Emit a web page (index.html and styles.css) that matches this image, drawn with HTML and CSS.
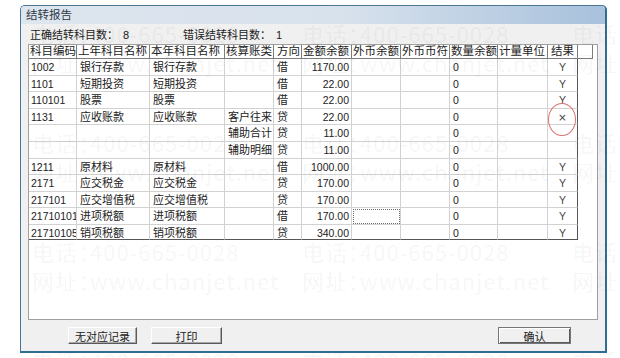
FILE: index.html
```html
<!DOCTYPE html>
<html lang="zh-CN">

<head>
  <meta charset="UTF-8">
  <title>结转报告</title>
  <link rel="stylesheet" href="styles.css">
</head>

<body>
  <div class="window">
    <div class="titlebar">结转报告</div>

    <div class="summary">
      <span class="stat">正确结转科目数：<em>8</em></span>
      <span class="stat">错误结转科目数：<em>1</em></span>
    </div>

    <div class="grid-panel">
      <div class="grid-head">
        <span>科目编码</span><span>上年科目名称</span><span>本年科目名称</span><span>核算账类</span><span>方向</span><span>金额余额</span><span>外币余额</span><span>外币币符</span><span>数量余额</span><span>计量单位</span><span>结果</span><span></span>
      </div>
      <div class="grid-body">
        <span>1002</span><span>银行存款</span><span>银行存款</span><span></span><span>借</span><span>1170.00</span><span></span><span></span><span>0</span><span></span><span>Y</span>
        <span>1101</span><span>短期投资</span><span>短期投资</span><span></span><span>借</span><span>22.00</span><span></span><span></span><span>0</span><span></span><span>Y</span>
        <span>110101</span><span>股票</span><span>股票</span><span></span><span>借</span><span>22.00</span><span></span><span></span><span>0</span><span></span><span>Y</span>
        <span>1131</span><span>应收账款</span><span>应收账款</span><span>客户往来</span><span>贷</span><span>22.00</span><span></span><span></span><span>0</span><span></span><span class="fail">×</span>
        <span></span><span></span><span></span><span>辅助合计</span><span>贷</span><span>11.00</span><span></span><span></span><span>0</span><span></span><span></span>
        <span></span><span></span><span></span><span>辅助明细</span><span>贷</span><span>11.00</span><span></span><span></span><span>0</span><span></span><span></span>
        <span>1211</span><span>原材料</span><span>原材料</span><span></span><span>借</span><span>1000.00</span><span></span><span></span><span>0</span><span></span><span>Y</span>
        <span>2171</span><span>应交税金</span><span>应交税金</span><span></span><span>贷</span><span>170.00</span><span></span><span></span><span>0</span><span></span><span>Y</span>
        <span>217101</span><span>应交增值税</span><span>应交增值税</span><span></span><span>贷</span><span>170.00</span><span></span><span></span><span>0</span><span></span><span>Y</span>
        <span>21710101</span><span>进项税额</span><span>进项税额</span><span></span><span>借</span><span>170.00</span><span class="focus"></span><span></span><span>0</span><span></span><span>Y</span>
        <span>21710105</span><span>销项税额</span><span>销项税额</span><span></span><span>贷</span><span>340.00</span><span></span><span></span><span>0</span><span></span><span>Y</span>
        <!-- 红圈标注 -->
        <i class="mark"></i>
      </div>
    </div>

    <div class="buttons">
      <button class="btn">无对应记录</button>
      <button class="btn btn-print">打印</button>
      <button class="btn btn-ok">确认</button>
    </div>
  </div>

  <!-- 水印 -->
  <div class="watermark">
    <div class="tile"><p>电话：400-665-0028</p><p>网址：www.chanjet.net</p></div>
    <div class="tile"><p>电话：400-665-0028</p><p>网址：www.chanjet.net</p></div>
    <div class="tile"><p>电话：400-665-0028</p><p>网址：www.chanjet.net</p></div>
    <div class="tile"><p>电话：400-665-0028</p><p>网址：www.chanjet.net</p></div>
    <div class="tile"><p>电话：400-665-0028</p><p>网址：www.chanjet.net</p></div>
    <div class="tile"><p>电话：400-665-0028</p><p>网址：www.chanjet.net</p></div>
    <div class="tile"><p>电话：400-665-0028</p><p>网址：www.chanjet.net</p></div>
    <div class="tile"><p>电话：400-665-0028</p><p>网址：www.chanjet.net</p></div>
    <div class="tile"><p>电话：400-665-0028</p><p>网址：www.chanjet.net</p></div>
    <div class="tile"><p>电话：400-665-0028</p></div>
    <div class="tile"><p>电话：400-665-0028</p></div>
    <div class="tile"><p>电话：400-665-0028</p></div>
  </div>
</body>

</html>
```

FILE: styles.css
```css
body {
  margin: 0;
  width: 620px;
  height: 358px;
  overflow: hidden;
  position: relative;
  background-color: #fff;
  font-family: "Liberation Sans", "Noto Sans CJK SC", sans-serif;
  color: #222;
}

.window {
  width: 584px;
  height: 345px;
  margin: 5px 0 0 20px;
  border: 1px solid #4a7593;
  border-right: 2px solid #2f6d92;
  border-bottom: 2px solid #2f6d92;
  border-radius: 5px 5px 0 0;
  background-color: #f0f0f0;
  display: flex;
  flex-direction: column;
}

.titlebar {
  height: 18px;
  padding-left: 5px;
  font-size: 11.5px;
  line-height: 18px;
  color: #2e3a48;
  border-radius: 4px 4px 0 0;
  background: linear-gradient(to right, #dde5ee 0%, #d8e2ed 55%, #a8c1dc 100%);
}

.summary {
  height: 20px;
  padding-left: 9px;
  display: flex;
  font-size: 11px;
  line-height: 16px;
  padding-top: 3px;
  box-sizing: border-box;
}

.stat {
  width: 153px;
}

.stat em {
  font-style: normal;
  margin-left: 5px;
}

.grid-panel {
  width: 570px;
  height: 276px;
  margin-left: 7px;
  box-sizing: border-box;
  border: 1px solid #a0a0a0;
  background-color: #fff;
}

.grid-head,
.grid-body {
  display: grid;
  grid-template-columns: 48px 73px 75px 49px 28px 50px 49px 49px 48px 50px 30px;
}

.grid-head {
  grid-template-columns: 48px 73px 75px 49px 28px 50px 49px 49px 48px 50px 30px 15px;
  grid-template-rows: 14px;
}

.grid-head span {
  border-right: 1px solid #7c7c7c;
  border-bottom: 1px solid #7c7c7c;
  padding-left: 1px;
  font-size: 11.5px;
  line-height: 13px;
  white-space: nowrap;
  overflow: hidden;
}

.grid-head span:nth-child(5),
.grid-head span:nth-child(11) {
  padding-left: 3px;
}

.grid-body {
  position: relative;
  grid-template-rows: repeat(10, 16.6px) 15px;
}

.grid-body span {
  border-right: 1px solid #d2d2d2;
  border-bottom: 1px solid #d2d2d2;
  padding: 1px 0 0 3px;
  font-size: 11px;
  line-height: 14px;
  white-space: nowrap;
  overflow: hidden;
}

.grid-body span:nth-child(11n+1) {
  padding-left: 2px;
  font-size: 10.5px;
}

.grid-body span:nth-child(11n+6) {
  text-align: right;
  padding: 1px 2px 0 0;
  font-size: 10.5px;
}

.grid-body span:nth-child(11n+9) {
  padding-left: 3px;
  font-size: 10.5px;
}

.grid-body span:nth-child(11n) {
  text-align: center;
  padding-left: 0;
  font-size: 10.5px;
  color: #444;
  border-right-color: #555;
}

.grid-body span:nth-child(n+111) {
  border-bottom-color: #555;
}

.grid-body .fail {
  font-family: "DejaVu Sans", sans-serif;
  font-size: 13px;
  line-height: 15px;
  color: #555;
}

.grid-body .focus {
  outline: 1px dotted #6c6c6c;
  outline-offset: -2px;
}

.mark {
  position: absolute;
  left: 519px;
  top: 44px;
  width: 26px;
  height: 31px;
  border: 1px solid #d77372;
  border-radius: 50%;
}

.buttons {
  display: flex;
  margin-top: 7px;
  padding: 0 34px 0 47px;
}

.btn {
  width: 69px;
  height: 17px;
  padding: 0;
  box-sizing: border-box;
  border: 1px solid;
  border-color: #fff #5a5a5a #5a5a5a #fff;
  box-shadow: inset -1px -1px 0 #a8a8a8;
  background-color: #f0f0f0;
  font-family: "Noto Sans CJK SC", sans-serif;
  font-size: 11px;
  line-height: 14px;
  color: #222;
}

.btn-print {
  width: 71px;
  margin-left: 14px;
}

.btn-ok {
  width: 73px;
  margin-left: auto;
  border-color: #767676;
  box-shadow: inset 1px 1px 0 #fff, inset -1px -1px 0 #5a5a5a;
}

.watermark {
  position: absolute;
  left: 0;
  top: 0;
  width: 620px;
  height: 358px;
  overflow: hidden;
  padding: 19px 0 0 32px;
  box-sizing: border-box;
  display: grid;
  grid-template-columns: repeat(3, 270px);
  grid-auto-rows: 109px;
  pointer-events: none;
  font-family: "Noto Sans CJK SC", sans-serif;
  font-feature-settings: "palt";
  font-size: 22px;
  line-height: 29px;
  letter-spacing: 1px;
  color: rgba(0, 0, 0, .055);
  white-space: nowrap;
}

.watermark p {
  margin: 0;
}
```
